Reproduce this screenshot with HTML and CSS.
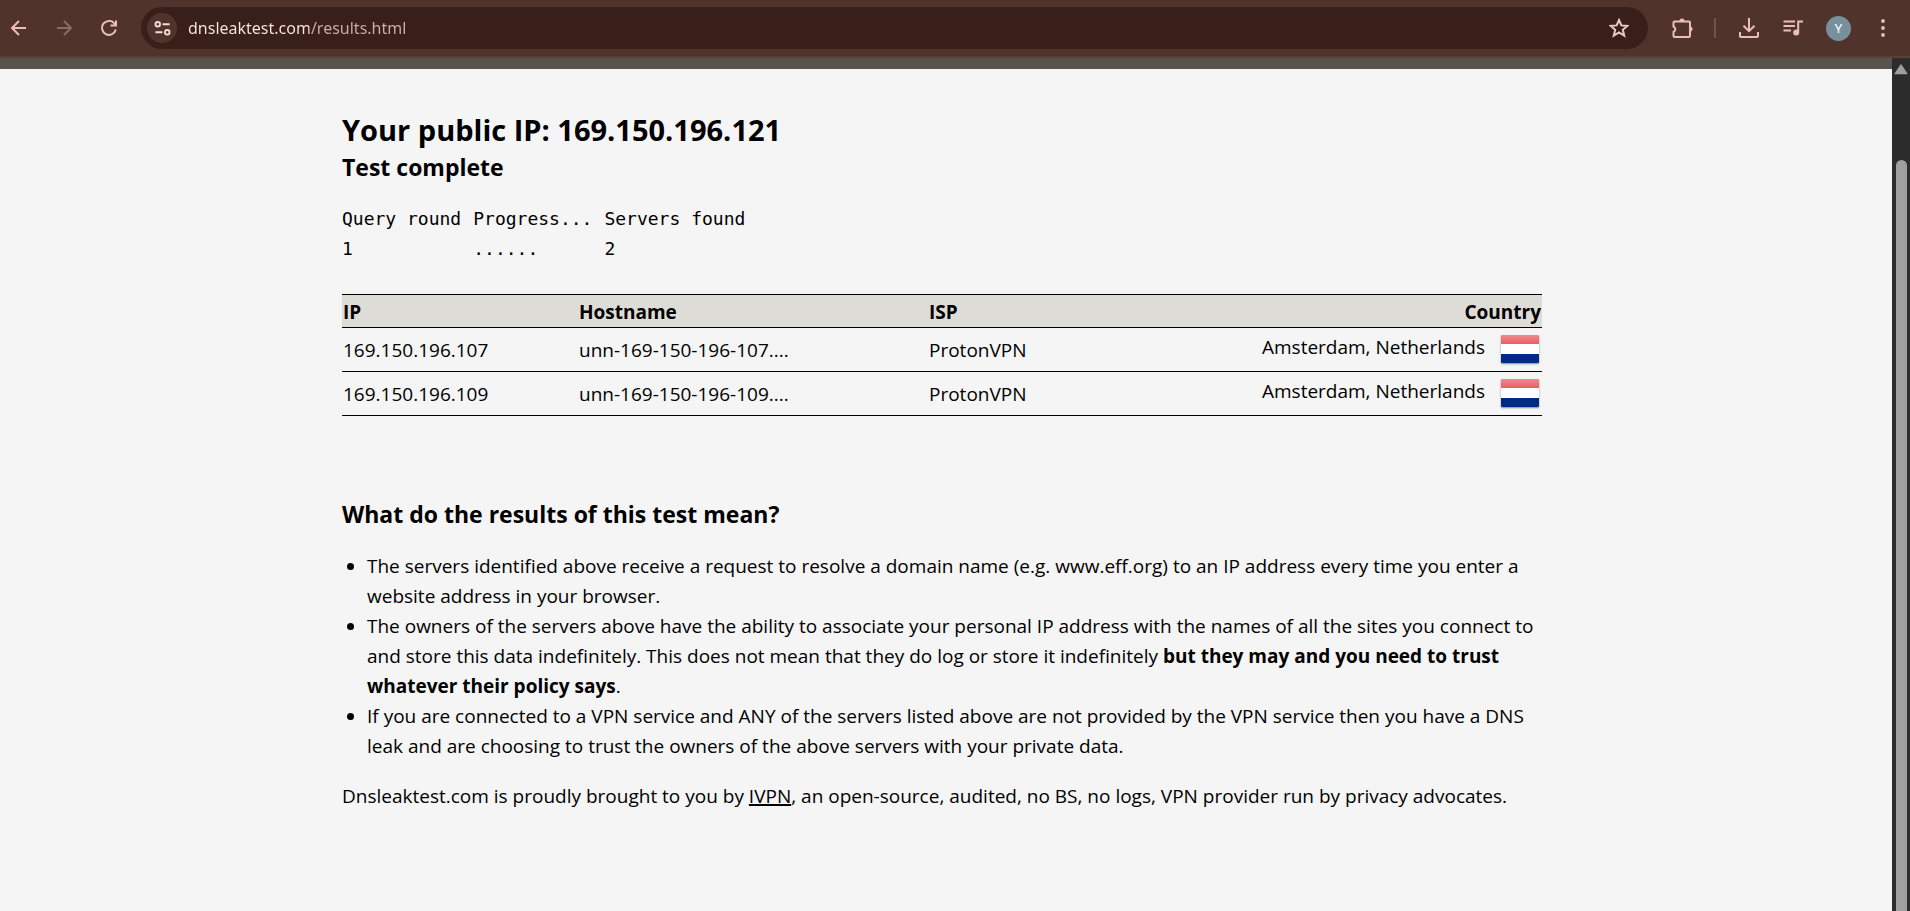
FILE: index.html
```html
<!DOCTYPE html>
<html lang="en">
<head>
<meta charset="utf-8">
<meta name="viewport" content="width=device-width, initial-scale=1">
<title>DNS leak test</title>
<link rel="stylesheet" href="styles.css">
</head>
<body>
<header class="toolbar">
  <nav class="nav-buttons" aria-label="Navigation">
    <button class="icon-button" aria-label="Back"><svg viewBox="0 0 20 20"><path d="M17 10H3.500M10 3L3 10l7 7"/></svg></button>
    <button class="icon-button" aria-label="Forward" disabled><svg viewBox="0 0 20 20"><path d="M3 10h13.500M10 3l7 7-7 7"/></svg></button>
    <button class="icon-button" aria-label="Reload"><svg viewBox="0 0 20 20"><path d="M16.800 11.500A7 7 0 1 1 15.200 5.200L17 7M17 2.500V7.600H11.500"/></svg></button>
  </nav>
  <div class="address">
    <button class="site-info" aria-label="Site information"><svg viewBox="0 0 20 20"><circle cx="5" cy="5.500" r="2.400"/><circle cx="15" cy="14" r="2.400"/><path d="M10 5.500h7.500M2.500 14H10"/></svg></button>
    <input class="url" type="text" aria-label="Address" value="dnsleaktest.com/results.html">
    <button class="icon-button star" aria-label="Bookmark"><svg viewBox="0 0 20 20"><path d="M10 2l2.400 5.400 5.900.500-4.500 3.900 1.400 5.800L10 14.500l-5.200 3.100 1.400-5.800L1.700 7.900l5.900-.500z"/></svg></button>
  </div>
  <div class="tools">
    <button class="icon-button" aria-label="Extensions"><svg viewBox="0 0 22 22"><path d="M3.500 4.500H18a1 1 0 0 1 1 1V19a1 1 0 0 1-1 1H3.500a1 1 0 0 1-1-1v-4a3 3 0 0 0 0-5.500v-4a1 1 0 0 1 1-1z"/><path class="solid" d="M8.500 4a2.500 2.500 0 0 1 5 0zM19 9.500a2.500 2.500 0 0 1 0 5z"/></svg></button>
    <span class="divider"></span>
    <button class="icon-button" aria-label="Downloads"><svg viewBox="0 0 22 22"><path d="M11 1v13M5.500 8.700L11 14.200l5.500-5.500M2 15v4a1 1 0 0 0 1 1h16a1 1 0 0 0 1-1v-4"/></svg></button>
    <button class="icon-button" aria-label="Media controls"><svg viewBox="0 0 22 22"><path d="M1.500 4.500h11.500M1.500 9h11.500M1.500 13.500h7.500M16.200 15V4.500H21"/><circle class="solid" cx="14.200" cy="15.500" r="3"/></svg></button>
    <button class="avatar" aria-label="Profile">Y</button>
    <button class="icon-button menu" aria-label="Menu"><svg viewBox="0 0 20 20"><circle class="solid" cx="10" cy="3" r="1.900"/><circle class="solid" cx="10" cy="10" r="1.900"/><circle class="solid" cx="10" cy="17" r="1.900"/></svg></button>
  </div>
</header>
<div class="viewport">
  <div class="page">
    <div class="site-strip"></div>
    <main class="content">
      <h1 class="title">Your public IP: 169.150.196.121</h1>
      <h2 class="heading">Test complete</h2>
      <table class="progress">
        <thead><tr><th>Query round</th><th>Progress...</th><th>Servers found</th></tr></thead>
        <tbody><tr><td>1</td><td>......</td><td>2</td></tr></tbody>
      </table>
      <table class="servers">
        <colgroup><col class="col-ip"><col class="col-host"><col class="col-isp"><col></colgroup>
        <thead><tr><th>IP</th><th>Hostname</th><th>ISP</th><th class="country">Country</th></tr></thead>
        <tbody>
          <tr><td>169.150.196.107</td><td>unn-169-150-196-107....</td><td>ProtonVPN</td><td><div class="place">Amsterdam, Netherlands <span class="flag" role="img" aria-label="Netherlands"></span></div></td></tr>
          <tr><td>169.150.196.109</td><td>unn-169-150-196-109....</td><td>ProtonVPN</td><td><div class="place">Amsterdam, Netherlands <span class="flag" role="img" aria-label="Netherlands"></span></div></td></tr>
        </tbody>
      </table>
      <h2 class="heading">What do the results of this test mean?</h2>
      <ul class="notes">
        <li>The servers identified above receive a request to resolve a domain name (e.g. www.eff.org) to an IP address every time you enter a website address in your browser.</li>
        <li>The owners of the servers above have the ability to associate your personal IP address with the names of all the sites you connect to and store this data indefinitely. This does not mean that they do log or store it indefinitely <b>but they may and you need to trust whatever their policy says</b>.</li>
        <li>If you are connected to a VPN service and ANY of the servers listed above are not provided by the VPN service then you have a DNS leak and are choosing to trust the owners of the above servers with your private data.</li>
      </ul>
      <p class="credit">Dnsleaktest.com is proudly brought to you by <a href="#">IVPN</a>, an open-source, audited, no BS, no logs, VPN provider run by privacy advocates.</p>
    </main>
  </div>
  <div class="scrollbar" aria-hidden="true">
    <svg class="scroll-arrow" viewBox="0 0 12 10"><path d="M6 1.500L11 9H1z"/></svg>
    <div class="thumb"></div>
  </div>
</div>
</body>
</html>
```
FILE: styles.css
```css
* { box-sizing: border-box; }
body {
  margin: 0;
  height: 100vh;
  display: flex;
  flex-direction: column;
  overflow: hidden;
  background: #f5f5f5;
  color: #000;
  font: 19px/30px "Open Sans", "Noto Sans", sans-serif;
}
button { border: 0; padding: 0; margin: 0; background: none; color: inherit; font: inherit; }

.toolbar {
  display: flex;
  align-items: center;
  height: 58px;
  flex: none;
  padding-right: 17px;
  background: #50342c;
  border-bottom: 2px solid #58403a;
  color: #ecbfb4;
}
.icon-button { display: flex; }
.icon-button svg, .site-info svg {
  width: 22px;
  height: 22px;
  fill: none;
  stroke: currentColor;
  stroke-width: 2;
}
.icon-button .solid { fill: currentColor; stroke: none; }
.icon-button:disabled { color: #8e6a60; }
.nav-buttons { display: flex; gap: 25px; padding: 0 22px 0 9px; }
.nav-buttons svg { width: 20px; height: 20px; }
.address {
  flex: 1;
  display: flex;
  align-items: center;
  height: 42px;
  padding: 0 19px 0 6px;
  border-radius: 21px;
  background: #391f19;
}
.site-info {
  display: grid;
  place-items: center;
  width: 30px;
  height: 30px;
  border-radius: 50%;
  background: #50342c;
  color: #f3dcd6;
}
.site-info svg { width: 19px; height: 19px; }
.url {
  flex: 1;
  border: 0;
  outline: 0;
  padding: 0 0 0 11px;
  color: #fbe9e4;
  background: linear-gradient(90deg, #fbe9e4 132px, #cbb0a8 132px);
  background-clip: text;
  -webkit-background-clip: text;
  -webkit-text-fill-color: transparent;
  font: 16px/26px "Noto Sans", "Open Sans", sans-serif;
}
.icon-button.star { color: #e2cbc5; }
.star svg { width: 20px; height: 20px; }
.tools { display: flex; align-items: center; gap: 22px; padding-left: 23px; }
.divider { width: 2px; height: 20px; margin: 0 0 0 -1px; background: #75524a; }
.avatar {
  width: 25px;
  height: 25px;
  border-radius: 50%;
  background: #78909c;
  color: #fff;
  font: 13px/25px Roboto, sans-serif;
}
.menu svg { width: 20px; height: 20px; }

.viewport { flex: 1; min-height: 0; display: flex; }
.page { flex: 1; overflow: hidden; }
.site-strip { height: 11px; background: #58534d; }
.content { max-width: 1200px; margin: 0 auto; padding-top: 42px; margin-left: calc(50% - 604px); }
.title { margin: 0; font-size: 29px; line-height: 38px; }
.heading { margin: 0; font-size: 23px; line-height: 36px; }

.progress {
  margin: 19px 0 30px;
  border-spacing: 0;
  font: 18px/30px "DejaVu Sans Mono", monospace;
}
.progress th, .progress td { padding: 0 12px 0 0; font-weight: 400; text-align: left; }

.servers { width: 100%; margin-bottom: 80px; border-collapse: collapse; table-layout: fixed; }
.servers tr { border-bottom: 1px solid #000; }
.servers thead tr { border-top: 1px solid #000; background: #dddcd6; }
.servers th { padding: 2px 1px 0; text-align: left; }
.servers td { height: 44px; padding: 1px; }
.servers .country { text-align: right; }
.col-ip { width: 236px; }
.col-host { width: 350px; }
.col-isp { width: 300px; }
.place { display: flex; justify-content: flex-end; gap: 16px; padding: 0 2px 2px 0; line-height: 24px; }
.flag {
  width: 38px;
  height: 28px;
  border-radius: 1px;
  background: linear-gradient(#f08a8d, #e85f63 9px, #fff 9px 19px, #002a87 19px);
  box-shadow: 0 1px 2px #888;
}

.notes { margin: 19px 0 20px; padding-left: 25px; }
.credit { margin: 0; }
.credit a { color: inherit; text-decoration-thickness: 2px; }

.scrollbar {
  display: flex;
  flex-direction: column;
  align-items: center;
  width: 18px;
  padding-top: 5px;
  background: #2c2c2c;
}
.scroll-arrow { width: 14px; height: 12px; fill: #9f9f9f; stroke: #9f9f9f; stroke-linejoin: round; }
.thumb { flex: 1; width: 11px; margin-top: 85px; border-radius: 6px 6px 0 0; background: #9f9f9f; }
```
